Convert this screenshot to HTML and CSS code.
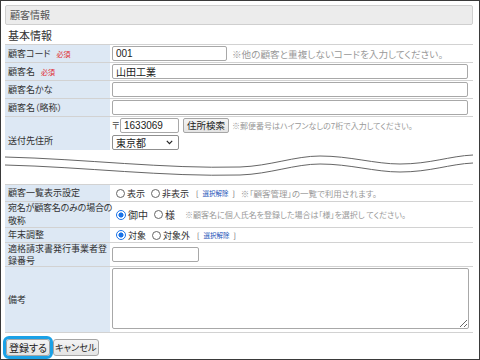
FILE: index.html
```html
<!DOCTYPE html>
<html lang="ja">
<head>
<meta charset="utf-8">
<title>顧客情報</title>
<link rel="stylesheet" href="styles.css">
</head>
<body>
<div class="frame">
  <div class="panel-title">顧客情報</div>
  <div class="section-title">基本情報</div>

  <div class="form form-top">
    <div class="row h17">
      <div class="label">顧客コード<span class="req">必須</span></div>
      <div class="value"><input class="input w-code" type="text" value="001"><span class="note note-code">※他の顧客と重複しないコードを入力してください。</span></div>
    </div>
    <div class="row h17">
      <div class="label">顧客名<span class="req">必須</span></div>
      <div class="value"><input class="input w-full" type="text" value="山田工業"></div>
    </div>
    <div class="row h17">
      <div class="label">顧客名かな</div>
      <div class="value"><input class="input w-full" type="text" value=""></div>
    </div>
    <div class="row h17">
      <div class="label">顧客名（略称）</div>
      <div class="value"><input class="input w-full" type="text" value=""></div>
    </div>
    <div class="row h33 last">
      <div class="label label-bottom">送付先住所</div>
      <div class="value value-stack">
        <div class="zip-line">
          <span class="zip-mark">〒</span><input class="input w-zip" type="text" value="1633069"><button class="btn btn-small" type="button">住所検索</button><span class="note note-zip">※郵便番号はハイフンなしの7桁で入力してください。</span>
        </div>
        <div class="select">
          <span>東京都</span>
          <svg class="chev" width="7" height="5" viewBox="0 0 7 5"><path d="M0.8 0.8 L3.5 3.6 L6.2 0.8" fill="none" stroke="#222" stroke-width="1.2"/></svg>
        </div>
      </div>
    </div>
  </div>

  <div class="break">
    <svg width="468" height="34" viewBox="0 0 468 34">
      <path d="M0 7 C 80 9 160 19 235 17 C 265 16 290 6 315 6 C 345 6 370 14 395 14 C 425 14 445 6 468 5" fill="none" stroke="#666" stroke-width="1"/>
      <path d="M0 15 C 80 17 160 27 235 25 C 265 24 290 14 315 14 C 345 14 370 22 395 22 C 425 22 445 14 468 13" fill="none" stroke="#666" stroke-width="1"/>
    </svg>
  </div>

  <div class="form form-bottom">
    <div class="row h16">
      <div class="label">顧客一覧表示設定</div>
      <div class="value">
        <div class="radios">
          <span class="radio-item"><span class="radio"></span>表示</span>
          <span class="radio-item"><span class="radio"></span>非表示</span>
          <span class="clear">[<a>選択解除</a>]</span>
          <span class="note note-radio">※「顧客管理」の一覧で利用されます。</span>
        </div>
      </div>
    </div>
    <div class="row h25">
      <div class="label label-tight">宛名が顧客名のみの場合の<br>敬称</div>
      <div class="value">
        <div class="radios">
          <span class="radio-item big"><span class="radio on"></span>御中</span>
          <span class="radio-item big"><span class="radio"></span>様</span>
          <span class="note note-honor">※顧客名に個人氏名を登録した場合は「様」を選択し てください。</span>
        </div>
      </div>
    </div>
    <div class="row h14">
      <div class="label">年末調整</div>
      <div class="value">
        <div class="radios">
          <span class="radio-item"><span class="radio on"></span>対象</span>
          <span class="radio-item"><span class="radio"></span>対象外</span>
          <span class="clear">[<a>選択解除</a>]</span>
        </div>
      </div>
    </div>
    <div class="row h23">
      <div class="label label-wrap">適格請求書発行事業者登録番号</div>
      <div class="value"><input class="input w-reg" type="text" value=""></div>
    </div>
    <div class="row h65">
      <div class="label">備考</div>
      <div class="value value-top"><textarea class="textarea"></textarea></div>
    </div>
  </div>

  <div class="actions">
    <button class="btn btn-main focused" type="button">登録する</button>
    <button class="btn btn-main btn-cancel" type="button">キャンセル</button>
  </div>
</div>
</body>
</html>
```

FILE: styles.css
```css
html, body {
  margin: 0;
  padding: 0;
  background: #fff;
}

body {
  font-family: "Noto Sans CJK JP", "Noto Sans", sans-serif;
  font-feature-settings: "palt";
  color: #333;
}

.frame {
  width: 480px;
  height: 360px;
  box-sizing: border-box;
  border: 1px solid #3a3a3a;
  padding: 4px 6px 0 4px;
  overflow: hidden;
}

.panel-title {
  height: 20px;
  box-sizing: border-box;
  border: 1px solid #cfcfcf;
  border-radius: 2px;
  background: #ececec;
  font-size: 10px;
  line-height: 18px;
  padding-left: 4px;
  color: #555;
}

.section-title {
  height: 19px;
  font-size: 11px;
  line-height: 20px;
  padding-left: 3px;
  color: #333;
}

.form {
  border-top: 1px solid #d2d2d2;
}

.row {
  display: grid;
  grid-template-columns: 105px 1fr;
  column-gap: 1px;
  border-bottom: 1px solid #d2d2d2;
}

.row.last {
  border-bottom: none;
}

.h14 { height: 14px; }
.h16 { height: 16px; }
.h17 { height: 17px; }
.h23 { height: 23px; }
.h25 { height: 25px; }
.h33 { height: 33px; }
.h65 { height: 65px; }

.label {
  background: #dde8f4;
  font-size: 9px;
  line-height: 12px;
  padding-left: 3px;
  display: flex;
  align-items: center;
  white-space: nowrap;
  color: #333;
}

.label-bottom {
  align-items: flex-end;
  padding-bottom: 3px;
}

.label-tight {
  letter-spacing: -0.2px;
  line-height: 12.5px;
}

.label-wrap {
  white-space: normal;
  word-break: break-all;
  line-height: 11.5px;
}

.req {
  color: #e0282e;
  font-size: 7px;
  margin-left: 6px;
}

.value {
  display: flex;
  align-items: center;
  padding-left: 1px;
  font-size: 9px;
  min-width: 0;
}

.value-stack {
  flex-direction: column;
  align-items: flex-start;
  justify-content: flex-start;
  padding-top: 1px;
  gap: 2px;
}

.value-top {
  align-items: flex-start;
  padding-top: 1px;
}

.input {
  box-sizing: border-box;
  height: 15px;
  margin: 0;
  border: 1px solid #a8a8a8;
  border-radius: 2px;
  padding: 0 3px;
  font: 10px "Liberation Sans", "Noto Sans CJK JP", sans-serif;
  color: #222;
  background: #fff;
  outline: none;
}

.w-code { width: 115px; }
.w-full { width: 356px; }
.w-zip { width: 59px; margin-left: 2px; }
.w-reg { width: 87px; }

.note {
  color: #999;
  font-size: 9px;
  margin-left: 5px;
  white-space: nowrap;
}

.note-code {
  font-size: 9.6px;
}

.zip-line {
  display: flex;
  align-items: center;
  height: 15px;
}

.zip-mark {
  font-size: 9px;
  color: #444;
  width: 6px;
}

.note-zip {
  margin-left: 3px;
  font-size: 8px;
}

.btn {
  box-sizing: border-box;
  margin: 0;
  padding: 0;
  border: 1px solid #a6a6a6;
  border-radius: 2px;
  background: linear-gradient(#f4f4f4, #e4e4e4);
  color: #222;
  font-family: "Noto Sans CJK JP", sans-serif;
  font-feature-settings: "palt";
  white-space: nowrap;
}

.btn-small {
  height: 15px;
  width: 46px;
  margin-left: 4px;
  font-size: 9.5px;
  line-height: 13px;
}

.select {
  box-sizing: border-box;
  width: 67px;
  height: 15px;
  border: 1px solid #8f8f8f;
  border-radius: 2px;
  display: flex;
  align-items: center;
  justify-content: space-between;
  padding: 0 5px 0 3px;
  font-size: 10px;
  color: #222;
}

.break {
  height: 34px;
}

.break svg {
  display: block;
}

.radios {
  display: flex;
  align-items: center;
  margin-left: 4px;
  white-space: nowrap;
}

.radio-item {
  display: inline-flex;
  align-items: center;
  gap: 2px;
  font-size: 9px;
  color: #333;
  margin-right: 6px;
}

.radio-item.big {
  font-size: 10px;
}

.radio {
  display: inline-block;
  box-sizing: border-box;
  width: 9px;
  height: 9px;
  border: 1px solid #666;
  border-radius: 50%;
  background: #fff;
}

.radio.on {
  width: 10px;
  height: 10px;
  border: 1.5px solid #1a73e8;
  background: radial-gradient(circle, #1a73e8 0 2.3px, #fff 2.8px);
}

.clear {
  font-size: 7px;
  color: #555;
  margin-left: 1px;
}

.clear a {
  color: #2452b8;
  font-size: 6.5px;
  margin: 0 4px;
}

.note-radio {
  margin-left: 6px;
  font-size: 8.5px;
}

.note-honor {
  margin-left: 4px;
  font-size: 8px;
}

.textarea {
  box-sizing: border-box;
  width: 357px;
  height: 61px;
  margin: 0;
  border: 1px solid #a8a8a8;
  border-radius: 2px;
  padding: 2px;
  font-size: 10px;
  background: #fff;
}

.actions {
  display: flex;
  gap: 3px;
  padding: 6px 0 0 1px;
}

.btn-main {
  min-width: 44px;
  height: 17px;
  padding: 0 2px;
  font-size: 10px;
  line-height: 15px;
  border-radius: 3px;
}

.btn-cancel {
  font-size: 9.2px;
  padding: 0 1px;
}

.btn-main.focused {
  outline: 3px solid #1ba1e6;
  outline-offset: 0;
}
```
